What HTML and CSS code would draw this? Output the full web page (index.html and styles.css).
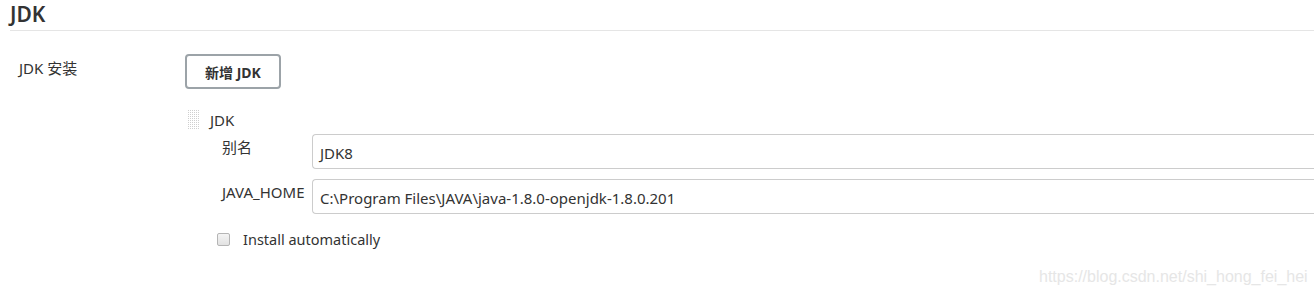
FILE: index.html
```html
<!DOCTYPE html>
<html>
<head>
<meta charset="utf-8">
<link rel="stylesheet" href="styles.css">
</head>
<body>
<div class="page">
  <h2 class="section-title">JDK</h2>
  <div class="row">
    <div class="row-label">JDK 安装</div>
    <div class="row-body">
      <button class="btn">新增 JDK</button>
      <div class="repeat">
        <div class="repeat-head">
          <span class="grip"></span>
          <span class="repeat-title">JDK</span>
        </div>
        <div class="field">
          <label class="field-label">别名</label>
          <div class="input">JDK8</div>
        </div>
        <div class="field">
          <label class="field-label">JAVA_HOME</label>
          <div class="input">C:\Program Files\JAVA\java-1.8.0-openjdk-1.8.0.201</div>
        </div>
        <div class="check">
          <span class="box"></span>
          <span class="check-label">Install automatically</span>
        </div>
      </div>
    </div>
  </div>
  <div class="watermark">https://blog.csdn.net/shi_hong_fei_hei</div>
</div>
</body>
</html>
```

FILE: styles.css
```css
html, body {
  margin: 0;
  padding: 0;
  background: #fff;
  overflow: hidden;
}
body {
  font-family: "Noto Sans", "Noto Sans CJK SC", sans-serif;
  color: #333;
  font-size: 15px;
}
.page {
  width: 1314px;
  height: 297px;
  position: relative;
}
.section-title {
  margin: 0 0 0 10px;
  padding: 2px 0 4px 0;
  font-size: 21px;
  font-weight: 600;
  line-height: 24px;
  border-bottom: 1px solid #e5e5e5;
  color: #333;
}
.row {
  display: flex;
  padding-top: 23px;
}
.row-label {
  width: 166px;
  padding-left: 19px;
  padding-top: 4px;
  line-height: 20px;
}
.row-body {
  flex: 1;
}
.btn {
  display: block;
  width: 96px;
  height: 35px;
  border: 2px solid #9ca3a8;
  border-radius: 4px;
  background: #fff;
  font-family: "Noto Sans", "Noto Sans CJK SC", sans-serif;
  font-weight: 700;
  font-size: 14px;
  color: #333;
  padding: 0;
}
.repeat {
  margin-top: 20px;
}
.repeat-head {
  display: flex;
  align-items: center;
  gap: 10px;
  height: 22px;
  padding-left: 3px;
}
.grip {
  width: 12px;
  height: 20px;
  background-image:
    linear-gradient(90deg, #cfcfcf 1px, transparent 1px),
    linear-gradient(#fff 0, #fff 0);
  background-size: 2px 2px;
  -webkit-mask-image: linear-gradient(#000 1px, transparent 1px);
  -webkit-mask-size: 2px 2px;
}
.repeat-title {
  line-height: 20px;
}
.field {
  display: flex;
  align-items: flex-start;
  margin-top: 3px;
  margin-bottom: 10px;
}
.field + .field {
  margin-top: 0;
}
.field-label {
  width: 90px;
  padding-left: 37px;
  line-height: 20px;
  padding-top: 3px;
  flex: none;
  white-space: nowrap;
}
.input {
  flex: 1;
  height: 35px;
  box-sizing: border-box;
  border: 1px solid #ccc;
  border-right: none;
  border-radius: 4px 0 0 4px;
  padding: 0 0 0 7px;
  line-height: 37px;
  font-size: 15px;
  color: #333;
  white-space: nowrap;
}
.check {
  display: flex;
  align-items: center;
  margin-top: 15px;
  padding-left: 32px;
}
.box {
  width: 11px;
  height: 11px;
  border: 1px solid #b5b5b5;
  border-radius: 2px;
  background: linear-gradient(#f4f4f4, #e2e2e2);
}
.check-label {
  margin-left: 13px;
  line-height: 20px;
  font-size: 14.5px;
}
.watermark {
  position: absolute;
  left: 1039px;
  top: 268px;
  font-family: "Liberation Sans", Arial, sans-serif;
  font-size: 16px;
  color: #e6e6e6;
  letter-spacing: 0;
}
```
